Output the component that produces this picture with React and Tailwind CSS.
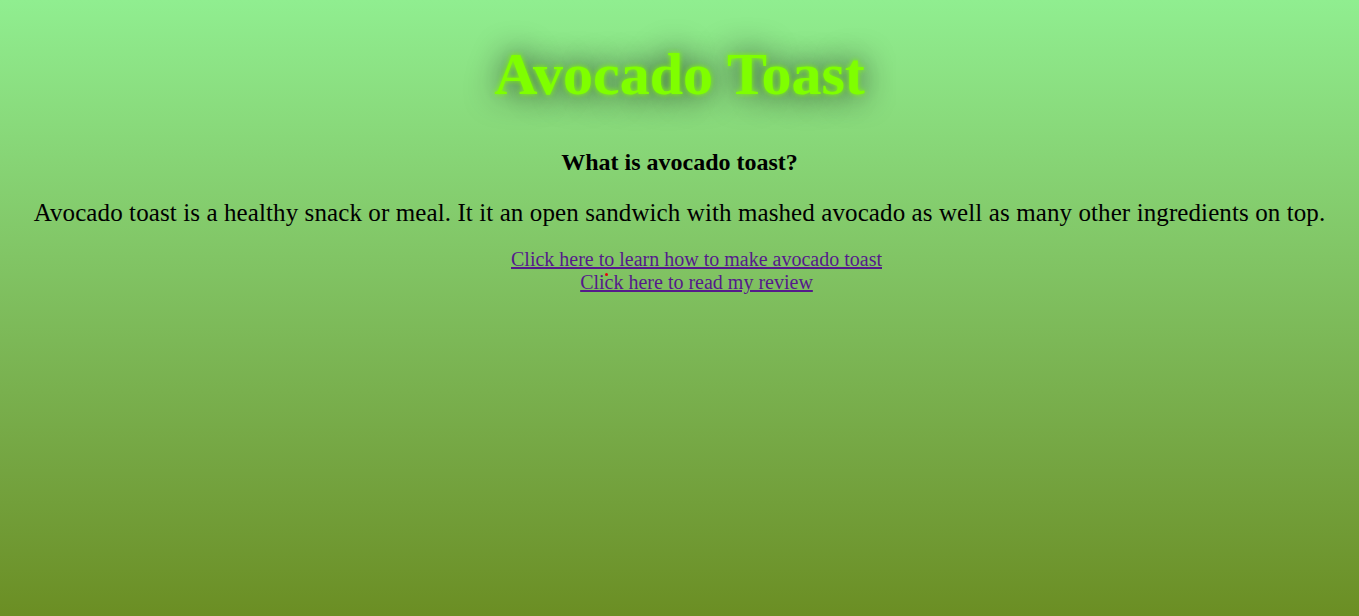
export default function App() {
  return (
    <div className="min-h-screen bg-gradient-to-b from-[#90ee90] to-[#6b8e23] text-center text-black relative" style={{ fontFamily: '"Liberation Serif", "Times New Roman", serif' }}>
      <div className="pt-[40px]">
        <h1 className="text-[60px] font-bold leading-[69px] text-[#7fff00] [text-shadow:0_0_5px_#7fff00,0_0_32px_rgba(0,0,0,0.9)]">Avocado Toast</h1>
        <h2 className="mt-[39px] text-[24px] font-bold leading-[28px]">What is avocado toast?</h2>
        <p className="mt-[22px] text-[25px] leading-[29px] tracking-[0.1px]">Avocado toast is a healthy snack or meal. It it an open sandwich with mashed avocado as well as many other ingredients on top.</p>
        <div className="mt-[21px] pl-[34px] text-[20px] leading-[23px]">
          <a href="#" className="text-[#551a8b] underline">Click here to learn how to make avocado toast</a>
          <br />
          <a href="#" className="text-[#551a8b] underline">Click here to read my review</a>
        </div>
      </div>
      <span className="absolute left-[605px] top-[273px] h-[3px] w-[3px] rounded-full bg-red-600"></span>
    </div>
  );
}
